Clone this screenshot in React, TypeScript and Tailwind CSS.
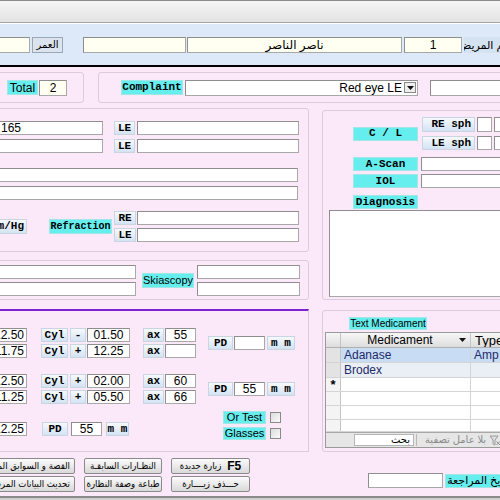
import React from "react";

type P = { className?: string; children?: React.ReactNode };

const SANS = "font-['Liberation_Sans','DejaVu_Sans',sans-serif]";
const MONO = "font-['Liberation_Mono','DejaVu_Sans_Mono',monospace]";
const ARABIC_BTN = "font-['DejaVu_Sans_Condensed','DejaVu_Sans',sans-serif]";

function Box({ className = "", children, cream = false }: P & { cream?: boolean }) {
  return (
    <div
      className={`flex shrink-0 items-center overflow-hidden whitespace-nowrap border border-[#a8a8a8] border-t-[#8e8e8e] border-l-[#8e8e8e] text-[12px] leading-none text-black ${SANS} ${
        cream ? "bg-[#fffff2]" : "bg-white"
      } ${className}`}
    >
      {children}
    </div>
  );
}

function Tag({ className = "", children }: P) {
  return (
    <div
      className={`flex shrink-0 items-center overflow-hidden whitespace-nowrap border border-[#c9d5e1] bg-linear-to-b from-[#f6f9fd] to-[#d3e3f3] text-[11px] font-bold leading-none text-black ${MONO} ${className}`}
    >
      {children}
    </div>
  );
}

function Cyan({ className = "", children, mono = false }: P & { mono?: boolean }) {
  return (
    <div
      className={`flex shrink-0 items-center justify-center overflow-hidden whitespace-nowrap border border-[#a3e6e6] bg-[#66eeee] leading-none text-black ${
        mono ? `${MONO} font-bold` : SANS
      } ${className}`}
    >
      {children}
    </div>
  );
}

function Btn({ className = "", children }: P) {
  return (
    <div
      className={`flex h-[16px] shrink-0 items-center overflow-hidden whitespace-nowrap rounded-[2px] border border-[#8a8a8a] bg-linear-to-b from-[#fbfbfb] to-[#d9d9d9] text-[9.5px] leading-none text-black ${ARABIC_BTN} ${className}`}
    >
      {children}
    </div>
  );
}

function Arrow() {
  return (
    <svg width="7" height="4" viewBox="0 0 7 4">
      <path d="M0 0h7L3.5 4z" fill="#111" />
    </svg>
  );
}

function Check() {
  return <div className="h-[11px] w-[11px] shrink-0 border border-[#8a8a8a] bg-linear-to-br from-[#dcdcdc] to-[#fafafa]" />;
}

function RxRow({ sph, sign, cyl, ax }: { sph: string; sign: string; cyl: string; ax: string }) {
  return (
    <div className="flex h-[14px] items-center">
      <Box className="h-[14px] w-[37px] justify-end pr-[2px]">{sph}</Box>
      <Tag className="ml-[14px] h-[14px] w-[27px] justify-center">Cyl</Tag>
      <Tag className="ml-[2px] h-[14px] w-[16px] justify-center">{sign}</Tag>
      <Box className="ml-px h-[14px] w-[43px] justify-center">{cyl}</Box>
      <Tag className="ml-[13px] h-[14px] w-[21px] justify-center">ax</Tag>
      <Box className="ml-px h-[14px] w-[31px] justify-center">{ax}</Box>
    </div>
  );
}

function PdGroup({ value }: { value: string }) {
  return (
    <div className="flex h-[14px] items-center">
      <Tag className="h-[14px] w-[25px] justify-center">PD</Tag>
      <Box className="ml-px h-[14px] w-[31px] justify-center">{value}</Box>
      <Tag className="ml-[2px] h-[14px] w-[28px] justify-center">m m</Tag>
    </div>
  );
}

function MedRow({ h, sel, bg, name, type, star = false }: { h: string; sel: string; bg: string; name: string; type: string; star?: boolean }) {
  return (
    <div className={`flex shrink-0 border-b border-[#d4d4d4] ${h}`}>
      <div className={`flex w-[15px] shrink-0 items-center justify-center border-r border-[#c4c4c4] text-[13px] font-bold leading-none ${sel}`}>
        {star ? "*" : ""}
      </div>
      <div className={`flex w-[130px] shrink-0 items-center border-r border-[#d4d4d4] pl-[3px] text-[12px] leading-none text-[#1d2a6a] ${bg}`}>{name}</div>
      <div className={`flex flex-1 items-center pl-[3px] text-[12px] leading-none text-[#1d2a6a] ${bg}`}>{type}</div>
    </div>
  );
}

export default function App() {
  return (
    <div className={`flex h-[500px] w-[500px] flex-col overflow-hidden bg-[#fbe8f8] ${SANS}`}>
      {/* window strip */}
      <div className="h-[23px] shrink-0 border-y border-t-[#8a8a8a] border-b-[#a4a4a4] bg-linear-to-b from-[#f5f5f5] to-[#e3e3e3]" />

      {/* patient band */}
      <div className="flex h-[42px] shrink-0 items-start border-t border-white bg-[#dde9f8] pt-[13px]">
        <div className="flex h-[16px] items-center">
          <Box cream className="-ml-[10px] h-[16px] w-[40px]" />
          <div className="ml-[2px] flex h-[16px] w-[31px] shrink-0 items-center justify-center border border-[#9aa7b6] bg-[#dbe4ee] text-[10px] leading-none">
            <span dir="rtl">العمر</span>
          </div>
          <Box cream className="ml-[20px] h-[16px] w-[103px]" />
          <Box cream className="ml-px h-[16px] w-[215px] justify-center">
            <span dir="rtl">ناصر الناصر</span>
          </Box>
          <Box cream className="ml-[2px] h-[16px] w-[58px] justify-center">1</Box>
          <div className="ml-[2px] flex h-[16px] w-[56px] shrink-0 items-center justify-end overflow-hidden whitespace-nowrap bg-[#d5e2f1] pr-[4px] text-[11px] leading-none">
            <span dir="rtl">اسم المريض</span>
          </div>
        </div>
      </div>
      <div className="h-[2px] shrink-0 bg-black" />

      {/* total / complaint */}
      <div className="mt-[5px] flex h-[31px] shrink-0">
        <div className="-ml-[10px] flex w-[94px] shrink-0 items-center rounded-[3px] border border-[#dccbd9] pl-[16px]">
          <Cyan className="h-[15px] w-[31px] text-[12px]">Total</Cyan>
          <Box cream className="ml-px h-[16px] w-[28px] justify-center">2</Box>
        </div>
        <div className="ml-[14px] flex w-[412px] shrink-0 items-center rounded-[3px] border border-[#dccbd9] pl-[22px]">
          <Cyan mono className="h-[15px] w-[62px] text-[11px]">Complaint</Cyan>
          <Box className="ml-[2px] h-[16px] w-[233px] justify-end pr-px">
            <span>Red eye LE</span>
            <span className="ml-[2px] flex h-[11px] w-[12px] items-center justify-center border border-[#8a8a8a] bg-[#eeeeee]">
              <Arrow />
            </span>
          </Box>
          <Box className="ml-[12px] h-[16px] w-[80px]" />
        </div>
      </div>

      {/* examination */}
      <div className="mt-[5px] flex h-[192px] shrink-0">
        <div className="-ml-[10px] flex w-[319px] shrink-0 flex-col">
          <div className="flex h-[144px] shrink-0 flex-col rounded-[3px] border border-[#dccbd9] pl-[4px] pt-[12px]">
            <div className="flex flex-col gap-[4px]">
              <div className="flex h-[14px] items-center">
                <Box className="h-[14px] w-[108px] pl-[5px]">165</Box>
                <Tag className="ml-[11px] h-[14px] w-[21px] justify-center">LE</Tag>
                <Box className="ml-[2px] h-[14px] w-[162px]" />
              </div>
              <div className="flex h-[14px] items-center">
                <Box className="h-[14px] w-[108px]" />
                <Tag className="ml-[11px] h-[14px] w-[21px] justify-center">LE</Tag>
                <Box className="ml-[2px] h-[14px] w-[162px]" />
              </div>
            </div>
            <div className="mt-[15px] flex flex-col gap-[4px]">
              <Box className="h-[14px] w-[303px]" />
              <Box className="h-[14px] w-[303px]" />
            </div>
            <div className="mt-[11px] flex items-center">
              <Tag className="h-[15px] w-[32px] justify-end pr-[2px]">mm/Hg</Tag>
              <Cyan mono className="ml-[22px] h-[15px] w-[63px] text-[10px]">Refraction</Cyan>
              <div className="ml-[2px] flex flex-col gap-[3px]">
                <div className="flex h-[14px] items-center">
                  <Tag className="h-[14px] w-[22px] justify-center">RE</Tag>
                  <Box className="ml-px h-[14px] w-[162px]" />
                </div>
                <div className="flex h-[14px] items-center">
                  <Tag className="h-[14px] w-[22px] justify-center">LE</Tag>
                  <Box className="ml-px h-[14px] w-[162px]" />
                </div>
              </div>
            </div>
          </div>
          <div className="mt-[8px] flex h-[40px] shrink-0 items-center rounded-[3px] border border-[#dccbd9] pl-[4px]">
            <div className="flex flex-col gap-[3px]">
              <Box className="h-[14px] w-[141px]" />
              <Box className="h-[14px] w-[141px]" />
            </div>
            <Cyan className="ml-[6px] h-[15px] w-[52px] text-[11px]">Skiascopy</Cyan>
            <div className="ml-[3px] flex flex-col gap-[3px]">
              <Box className="h-[14px] w-[103px]" />
              <Box className="h-[14px] w-[103px]" />
            </div>
          </div>
        </div>

        <div className="ml-[13px] mt-[2px] flex h-[190px] w-[190px] shrink-0 flex-col rounded-[3px] border border-[#dccbd9] pt-[6px]">
          <div className="flex items-center">
            <Cyan mono className="ml-[30px] h-[14px] w-[65px] text-[11px]">C / L</Cyan>
            <div className="ml-[4px] flex flex-col gap-[4px]">
              <div className="flex h-[15px] items-center">
                <Tag className="h-[15px] w-[53px] justify-end pr-[3px]">RE sph</Tag>
                <Box className="ml-[2px] h-[15px] w-[15px]" />
                <Box className="ml-[2px] h-[15px] w-[15px]" />
              </div>
              <div className="flex h-[14px] items-center">
                <Tag className="h-[14px] w-[53px] justify-end pr-[3px]">LE sph</Tag>
                <Box className="ml-[2px] h-[14px] w-[15px]" />
                <Box className="ml-[2px] h-[14px] w-[15px]" />
              </div>
            </div>
          </div>
          <div className="mt-[7px] flex items-center">
            <Cyan mono className="ml-[30px] h-[14px] w-[65px] text-[11px]">A-Scan</Cyan>
            <Box className="ml-[3px] h-[14px] w-[90px]" />
          </div>
          <div className="mt-[3px] flex items-center">
            <Cyan mono className="ml-[30px] h-[14px] w-[65px] text-[11px]">IOL</Cyan>
            <Box className="ml-[3px] h-[14px] w-[90px]" />
          </div>
          <div className="mt-[7px] flex items-center">
            <Cyan mono className="ml-[30px] h-[14px] w-[65px] text-[11px]">Diagnosis</Cyan>
          </div>
          <Box className="ml-[6px] mt-px h-[87px] w-[182px]" />
        </div>
      </div>

      {/* spectacles prescription + medication */}
      <div className="mt-[9px] flex h-[143px] shrink-0">
        <div className="-ml-[10px] flex w-[319px] shrink-0 flex-col border-t-2 border-r border-b border-t-[#7d22d3] border-r-[#dccbd9] border-b-[#dccbd9] pt-[17px]">
          <div className="flex items-center">
            <div className="flex flex-col gap-[2px]">
              <RxRow sph="12.50" sign="-" cyl="01.50" ax="55" />
              <RxRow sph="11.75" sign="+" cyl="12.25" ax="" />
            </div>
            <div className="ml-[12px]">
              <PdGroup value="" />
            </div>
          </div>
          <div className="mt-[16px] flex items-center">
            <div className="flex flex-col gap-[2px]">
              <RxRow sph="12.50" sign="+" cyl="02.00" ax="60" />
              <RxRow sph="11.25" sign="+" cyl="05.50" ax="66" />
            </div>
            <div className="ml-[12px]">
              <PdGroup value="55" />
            </div>
          </div>
          <div className="mt-[7px] flex items-start">
            <div className="mt-[11px] flex h-[14px] items-center">
              <Box className="h-[14px] w-[37px] justify-end pr-[2px]">12.25</Box>
              <Tag className="ml-[15px] h-[14px] w-[26px] justify-center">PD</Tag>
              <Box className="ml-[3px] h-[14px] w-[31px] justify-center">55</Box>
              <Tag className="ml-[4px] h-[14px] w-[23px] justify-center">m m</Tag>
            </div>
            <div className="ml-[94px] flex flex-col gap-[3px]">
              <div className="flex h-[13px] items-center">
                <Cyan className="h-[13px] w-[43px] text-[11px]">Or Test</Cyan>
                <div className="ml-[4px]">
                  <Check />
                </div>
              </div>
              <div className="flex h-[13px] items-center">
                <Cyan className="h-[13px] w-[43px] text-[11px]">Glasses</Cyan>
                <div className="ml-[4px]">
                  <Check />
                </div>
              </div>
            </div>
          </div>
        </div>

        <div className="ml-[13px] mt-px flex h-[142px] w-[190px] shrink-0 flex-col rounded-[3px] border border-[#dccbd9] pt-[6px]">
          <Cyan className="ml-[26px] h-[13px] w-[78px] text-[10px]">Text Medicament</Cyan>
          <div className="ml-[2px] mt-[2px] flex h-[116px] w-[186px] shrink-0 flex-col border border-[#9a9a9a] bg-white">
            <div className="flex h-[15px] shrink-0 border-b border-[#b0b0b0] bg-linear-to-b from-[#f7f7f7] to-[#dddddd]">
              <div className="w-[15px] shrink-0 border-r border-[#c4c4c4]" />
              <div className="flex w-[130px] shrink-0 items-center border-r border-[#c4c4c4] text-[12px] leading-none">
                <span className="flex-1 text-center">Medicament</span>
                <span className="mr-[4px]">
                  <Arrow />
                </span>
              </div>
              <div className="flex flex-1 items-center overflow-hidden whitespace-nowrap pl-[4px] text-[13px] leading-none">Type</div>
            </div>
            <MedRow h="h-[15px]" sel="bg-[#e3e3e3]" bg="bg-[#c8dcf4]" name="Adanase" type="Amp" />
            <MedRow h="h-[15px]" sel="bg-[#e3e3e3]" bg="bg-[#eaeff6]" name="Brodex" type="" />
            <MedRow h="h-[14px]" sel="bg-[#f4f4f4]" bg="bg-white" name="" type="" star />
            <MedRow h="h-[14px]" sel="bg-[#f4f4f4]" bg="bg-white" name="" type="" />
            <MedRow h="h-[14px]" sel="bg-[#f4f4f4]" bg="bg-white" name="" type="" />
            <MedRow h="h-[12px]" sel="bg-[#f4f4f4]" bg="bg-white" name="" type="" />
            <div className="flex flex-1 items-center border-t border-[#a8a8a8] bg-[#e6e6e6]">
              <div className="ml-[28px] flex h-[12px] w-[60px] items-center justify-end border border-[#b4b4b4] bg-white pr-[3px] text-[10px] leading-none">
                <span dir="rtl">بحث</span>
              </div>
              <div className="ml-[2px] h-[12px] w-px bg-[#b8b8b8]" />
              <div className="ml-[8px] whitespace-nowrap text-[10px] leading-none text-[#8a8a8a]">
                <span dir="rtl">بلا عامل تصفية</span>
              </div>
              <svg className="ml-[3px]" width="12" height="11" viewBox="0 0 12 11">
                <path d="M1 1h8L6 5v5L4 9V5z" fill="#dedede" stroke="#8a8a8a" strokeWidth="0.8" />
                <path d="M7.5 6.5l3.5 3.5M11 6.5l-3.5 3.5" stroke="#8a8a8a" strokeWidth="1" />
              </svg>
            </div>
          </div>
        </div>
      </div>

      {/* command buttons and follow-up date */}
      <div className="mt-[6px] flex h-[34px] shrink-0">
        <div className="-ml-[5px] grid grid-cols-[80px_78px_79px] grid-rows-[16px_16px] gap-x-[9px] gap-y-[2px]">
          <Btn className="justify-end pr-[4px]">
            <span dir="rtl">القصة و السوابق المرضية</span>
          </Btn>
          <Btn className="justify-center">
            <span dir="rtl">النظـارات السابقـة</span>
          </Btn>
          <Btn className="justify-center">
            <span dir="rtl">زيارة جديدة</span>
            <span className={`ml-[6px] text-[12px] font-bold ${SANS}`}>F5</span>
          </Btn>
          <Btn className="justify-end pr-[4px]">
            <span dir="rtl">تحديث البيانات المرضية</span>
          </Btn>
          <Btn className="justify-center">
            <span dir="rtl">طباعة وصفة النظارة</span>
          </Btn>
          <Btn className="justify-center">
            <span dir="rtl">حـــذف زيــــارة</span>
          </Btn>
        </div>
        <div className="ml-[118px] mt-[15px] flex h-[15px] items-center">
          <Box className="h-[15px] w-[75px]" />
          <Cyan className="ml-[2px] h-[14px] w-[72px] justify-end pr-[4px] text-[11px]">
            <span dir="rtl">تاريخ المراجعة</span>
          </Cyan>
        </div>
      </div>

      <div className="mt-[4px] h-[4px] shrink-0 border-t-2 border-[#8b8b8b] bg-[#cfcfcf]" />
    </div>
  );
}
